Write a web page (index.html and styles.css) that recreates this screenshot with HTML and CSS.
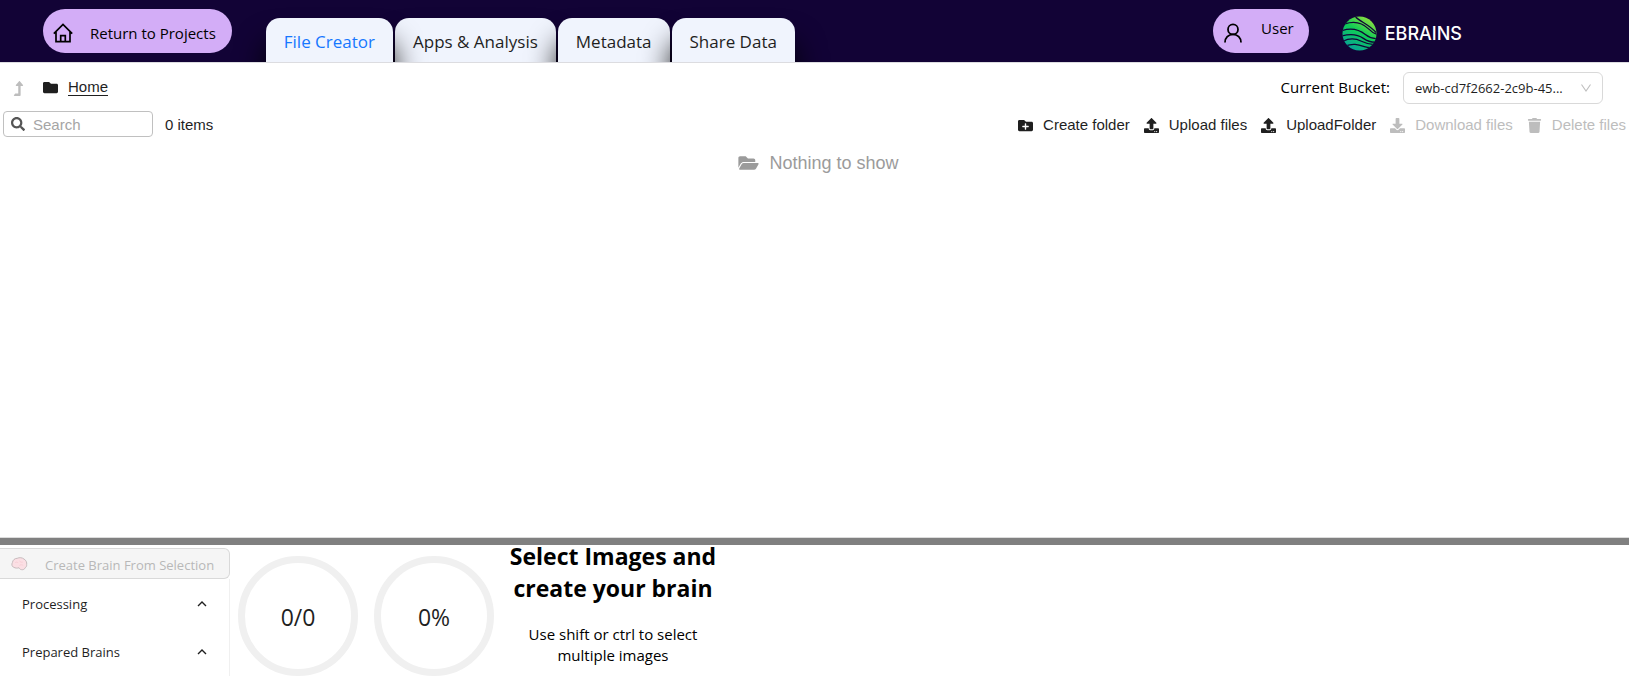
FILE: index.html
```html
<!DOCTYPE html>
<html lang="en">
<head>
<meta charset="utf-8">
<title>File Creator</title>
<link rel="stylesheet" href="styles.css">
</head>
<body>
<svg class="defs" aria-hidden="true">
  <symbol id="upload" viewBox="0 0 512 512"><path d="M296 384h-80c-13.3 0-24-10.7-24-24V192h-87.7c-17.8 0-26.7-21.5-14.1-34.1L242.3 5.7c7.5-7.5 19.8-7.5 27.3 0l152.2 152.2c12.6 12.6 3.7 34.1-14.1 34.1H320v168c0 13.3-10.7 24-24 24zm216-8v112c0 13.3-10.7 24-24 24H24c-13.3 0-24-10.7-24-24V376c0-13.3 10.7-24 24-24h136v8c0 30.9 25.1 56 56 56h80c30.9 0 56-25.1 56-56v-8h136c13.3 0 24 10.7 24 24zm-124 88c0-11-9-20-20-20s-20 9-20 20 9 20 20 20 20-9 20-20zm64 0c0-11-9-20-20-20s-20 9-20 20 9 20 20 20 20-9 20-20z"/></symbol>
  <symbol id="caret" viewBox="0 0 12 12"><path d="M2 8l4-4 4 4" fill="none" stroke="currentColor" stroke-width="1.4"/></symbol>
</svg>

<header class="topbar">
  <button class="pill home" type="button">
    <svg class="pill-icon" viewBox="0 0 20 20" fill="none" stroke="currentColor" stroke-width="1.7"><path d="M.8 10.6L10 1.4l9.200 9.200M3 9v9.600h14V9M7.700 18.600v-6h4.600v6"/></svg>
    <span>Return to Projects</span>
  </button>
  <nav class="tabs">
    <button class="tab active" type="button">File Creator</button>
    <button class="tab" type="button">Apps &amp; Analysis</button>
    <button class="tab" type="button">Metadata</button>
    <button class="tab" type="button">Share Data</button>
  </nav>
  <button class="pill user" type="button">
    <svg class="pill-icon" viewBox="0 0 20 20" fill="none" stroke="currentColor" stroke-width="1.8"><circle cx="10" cy="6.4" r="5"/><path d="M2 19.400c0-4.600 3.400-8 8-8s8 3.400 8 8"/></svg>
    <span class="user-name">User</span>
  </button>
  <a class="brand" href="#">
    <svg class="brand-mark" viewBox="0 0 36 36">
      <defs>
        <linearGradient id="leaf" x1="0.9" y1="0" x2="0.3" y2="1"><stop offset="0" stop-color="#a6e23c"/><stop offset=".5" stop-color="#10cc55"/><stop offset="1" stop-color="#07a398"/></linearGradient>
        <clipPath id="disc"><circle cx="18" cy="18" r="17.5"/></clipPath>
      </defs>
      <circle cx="18" cy="18" r="17.500" fill="url(#leaf)"/>
      <g clip-path="url(#disc)" fill="none" stroke="#120336" stroke-width="1.3">
        <path d="M14 1c5 5 14 8 21 16"/>
        <path d="M3 8c9-3 18-1 24 5 3 3 6 5 9 6"/>
        <path d="M0 15c12-4 19 0 24 4s8 4 12 4.500"/>
        <path d="M0 20.500c11-3 17-1 22 2.500s8 4 12 4"/>
        <path d="M1 26c8-4 15-2 19 0s7 3 13 3.500"/>
        <path d="M3 31c8-3 13-2 20 .5 3 1 5 1 7 1"/>
      </g>
    </svg>
    <span>EBRAINS</span>
  </a>
</header>

<main class="browser">
  <div class="path-row">
    <button class="icon-button" type="button" aria-label="Go up" disabled>
      <svg class="icon" viewBox="0 0 320 512" fill="currentColor"><path d="M313.500 135.700L205 9.400c-7-8-19-8-26 0L70.500 135.700C60 148 69 168 86 168h66v256H64c-5 0-11 2-15 6L7 479c-12 12-4 33 15 33h186c13 0 24-11 24-24V168h66c17 0 26-20 15.500-32.300z"/></svg>
    </button>
    <nav class="crumbs">
      <svg class="icon" viewBox="0 0 512 512" fill="currentColor"><path d="M464 128H272l-64-64H48C21.490 64 0 85.490 0 112v288c0 26.510 21.490 48 48 48h416c26.510 0 48-21.490 48-48V176c0-26.510-21.490-48-48-48z"/></svg>
      <a href="#">Home</a>
    </nav>
    <label class="bucket-label" for="bucket">Current Bucket:</label>
    <div class="bucket">
      <select id="bucket"><option>ewb-cd7f2662-2c9b-45...</option></select>
      <svg class="bucket-arrow" viewBox="0 0 12 12"><path d="M1.500 2.500L6 9l4.500-6.500" fill="none" stroke="#bfbfbf" stroke-width="1.100"/></svg>
    </div>
  </div>

  <div class="tool-row">
    <div class="search">
      <svg class="search-icon" viewBox="0 0 512 512" fill="currentColor"><path d="M505 442.700L405.300 343c-4.500-4.500-10.600-7-17-7H372c27.600-35.300 44-79.700 44-128C416 93.100 322.900 0 208 0S0 93.100 0 208s93.100 208 208 208c48.300 0 92.700-16.400 128-44v16.300c0 6.400 2.500 12.500 7 17l99.700 99.700c9.400 9.400 24.600 9.400 33.900 0l28.300-28.300c9.400-9.400 9.400-24.600.1-34zM208 336c-70.700 0-128-57.200-128-128 0-70.700 57.200-128 128-128 70.700 0 128 57.200 128 128 0 70.700-57.200 128-128 128z"/></svg>
      <input type="text" placeholder="Search" aria-label="Search">
    </div>
    <span class="count">0 items</span>
    <div class="actions">
      <button class="action" type="button"><svg class="icon" viewBox="0 0 512 512" fill="currentColor"><path d="M464 128H272l-64-64H48C21.490 64 0 85.490 0 112v288c0 26.510 21.490 48 48 48h416c26.510 0 48-21.490 48-48V176c0-26.510-21.490-48-48-48zm-96 168c0 8.840-7.160 16-16 16h-72v72c0 8.840-7.160 16-16 16h-16c-8.840 0-16-7.160-16-16v-72h-72c-8.840 0-16-7.160-16-16v-16c0-8.840 7.160-16 16-16h72v-72c0-8.840 7.160-16 16-16h16c8.840 0 16 7.160 16 16v72h72c8.840 0 16 7.160 16 16v16z"/></svg>Create folder</button>
      <button class="action" type="button"><svg class="icon" fill="currentColor"><use href="#upload"/></svg>Upload files</button>
      <button class="action" type="button"><svg class="icon" fill="currentColor"><use href="#upload"/></svg>UploadFolder</button>
      <button class="action" type="button" disabled><svg class="icon" viewBox="0 0 512 512" fill="currentColor"><path d="M216 0h80c13.300 0 24 10.700 24 24v168h87.700c17.800 0 26.700 21.500 14.100 34.100L269.700 378.300c-7.500 7.500-19.800 7.500-27.300 0L90.100 226.100c-12.600-12.600-3.700-34.100 14.100-34.100H192V24c0-13.300 10.700-24 24-24zm296 376v112c0 13.300-10.700 24-24 24H24c-13.300 0-24-10.700-24-24V376c0-13.300 10.700-24 24-24h146.700l49 49c20.100 20.100 52.500 20.100 72.600 0l49-49H488c13.300 0 24 10.700 24 24zm-124 88c0-11-9-20-20-20s-20 9-20 20 9 20 20 20 20-9 20-20zm64 0c0-11-9-20-20-20s-20 9-20 20 9 20 20 20 20-9 20-20z"/></svg>Download files</button>
      <button class="action" type="button" disabled><svg class="icon" viewBox="0 0 448 512" fill="currentColor"><path d="M432 32H312l-9.400-18.700A24 24 0 0 0 281.100 0H166.800a23.720 23.720 0 0 0-21.400 13.300L136 32H16A16 16 0 0 0 0 48v32a16 16 0 0 0 16 16h416a16 16 0 0 0 16-16V48a16 16 0 0 0-16-16zM53.200 467a48 48 0 0 0 47.900 45h245.800a48 48 0 0 0 47.900-45L416 128H32z"/></svg>Delete files</button>
    </div>
  </div>

  <p class="empty">
    <svg class="empty-icon" viewBox="0 0 576 512" fill="currentColor"><path d="M572.694 292.093L500.270 416.248A63.997 63.997 0 0 1 444.989 448H45.025c-18.523 0-30.064-20.093-20.731-36.093l72.424-124.155A64 64 0 0 1 152 256h399.964c18.523 0 30.064 20.093 20.730 36.093zM152 224h328v-48c0-26.510-21.490-48-48-48H272l-64-64H48C21.490 64 0 85.490 0 112v278.046l69.077-118.418C86.214 242.250 117.989 224 152 224z"/></svg>
    Nothing to show
  </p>
</main>

<section class="workbench">
  <aside class="side">
    <button class="create" type="button" disabled>
      <svg class="brain" viewBox="0 0 18 16"><path d="M3 11.500C.8 11 .4 8 1.500 6.500 1.800 3.800 4 2 6.500 2c2.500-1.200 5.500-.8 7.300.8C16 4 17 6.500 16.600 8.500c.2 2-.8 3-1.600 3.500-.6 1.600-2.200 2.300-3.800 2-1.200 0-2-.8-2.700-2-1.800.5-4 .5-5.500-.5z" fill="#fbdfe4" stroke="#c4b8ba"/><path d="M4.500 6.500c1.500-1 2.500-.5 3 .5M9 4.500c.5 1.500 2 2 3.500 1.500M9 9.500c1.500-1 3-.8 4 .3" fill="none" stroke="#f5c9d1" stroke-width=".8"/></svg>
      <span>Create Brain From Selection</span>
    </button>
    <div class="groups">
      <button class="group" type="button">Processing<svg class="caret"><use href="#caret"/></svg></button>
      <button class="group" type="button">Prepared Brains<svg class="caret"><use href="#caret"/></svg></button>
    </div>
  </aside>
  <div class="rings">
    <div class="ring">0/0</div>
    <div class="ring">0%</div>
  </div>
  <div class="hint">
    <h2>Select Images and create your brain</h2>
    <p>Use shift or ctrl to select multiple images</p>
  </div>
</section>
</body>
</html>
```

FILE: styles.css
```css
* { box-sizing: border-box; }

body {
  margin: 0;
  min-height: 100vh;
  display: flex;
  flex-direction: column;
  background: #fff;
  color: #000;
  font: 15px/20px "Open Sans", "Noto Sans", sans-serif;
}

button, input, select { font: inherit; color: inherit; }
button { border: 0; padding: 0; background: none; }
svg { display: block; flex: none; }
.defs { position: absolute; width: 0; height: 0; }

.topbar {
  display: flex;
  align-items: flex-start;
  height: 63px;
  padding-left: 43px;
  background: #120336;
  border-bottom: 1px solid #dcdce0;
  overflow: hidden;
}

.pill {
  display: flex;
  align-items: center;
  height: 44px;
  margin-top: 9px;
  border-radius: 22px;
  background: #d3adf7;
}
.pill-icon { width: 20px; height: 20px; margin-top: 4px; }
.home { padding: 0 16px 0 10px; gap: 17px; }
.home span { padding-top: 4px; }
.user { margin-left: auto; padding: 0 15px 0 10px; gap: 18px; }
.user-name { padding-bottom: 6px; }

.tabs { display: flex; gap: 2px; margin: 18px 0 0 34px; }
.tab {
  position: relative;
  height: 44px;
  padding: 4px 18px 0;
  border-radius: 14px 14px 0 0;
  background: #f0f4fd;
  color: #1f1f1f;
  font-size: 17px;
  box-shadow: 0 25px 30px #000;
}
.tab.active { z-index: 1; color: #1677ff; }

.brand {
  display: flex;
  align-items: center;
  gap: 8px;
  margin: 16px 167px 0 33px;
  color: #fff;
  font: 500 18px/35px Inter, sans-serif;
  text-decoration: none;
}
.brand-mark { width: 35px; height: 35px; }

.browser {
  flex: 1;
  border-bottom: 1px solid #dcdcdc;
  color: #1f1f1f;
  font-family: "Liberation Sans", Arial, sans-serif;
}

.icon { width: 15px; height: 15px; }

.path-row { display: flex; align-items: center; padding: 9px 26px 0 11px; }
.icon-button:disabled { color: #bdbdbd; }
.crumbs { display: flex; align-items: center; gap: 10px; margin-left: 17px; padding-bottom: 2px; }
.crumbs a { color: inherit; line-height: 16px; text-decoration: none; border-bottom: 1px solid; }
.bucket-label { margin-left: auto; padding-bottom: 2px; color: #000; font-family: "Open Sans", sans-serif; }
.bucket { position: relative; width: 200px; margin-left: 13px; }
.bucket select {
  width: 100%;
  height: 32px;
  padding: 0 30px 0 11px;
  border: 1px solid #d9d9d9;
  border-radius: 6px;
  background: #fff;
  appearance: none;
  font: 13px "Open Sans", sans-serif;
}
.bucket-arrow { position: absolute; right: 11px; top: 10px; width: 12px; height: 12px; }

.tool-row { display: flex; align-items: center; padding: 7px 3px 0; line-height: 22px; }
.search {
  display: flex;
  align-items: center;
  gap: 8px;
  width: 150px;
  height: 26px;
  padding: 0 7px;
  border: 1px solid #c0c0c0;
  border-radius: 4px;
}
.search-icon { width: 14px; height: 14px; color: #555; }
.search input { width: 100%; min-width: 0; padding: 1px 0 0; border: 0; outline: 0; background: none; }
.search input::placeholder { color: #a5a5a5; }
.count { margin-left: 12px; padding-top: 2px; }
.actions { display: flex; gap: 14px; margin-left: auto; padding-top: 2px; }
.action { display: flex; align-items: center; gap: 10px; }
.action:disabled { color: #bdbdbd; }

.empty {
  display: flex;
  justify-content: center;
  align-items: center;
  gap: 10px;
  margin: 16px 0 0;
  padding-left: 8px;
  color: #9b9b9b;
  font-size: 18px;
}
.empty-icon { width: 21px; height: 18px; }

.workbench { display: flex; height: 138px; border-top: 7px solid #808080; overflow: hidden; }

.side { display: flex; flex-direction: column; width: 230px; padding-top: 3px; }
.create {
  display: flex;
  align-items: center;
  gap: 17px;
  height: 32px;
  padding-left: 11px;
  border: 1px solid #d9d9d9;
  border-left: 0;
  border-radius: 0 6px 6px 0;
  background: #f5f5f5;
  color: #b8b8b8;
  font-size: 13px;
}
.create span { padding-top: 2px; }
.brain { width: 17px; height: 16px; }
.groups { flex: 1; padding-top: 1px; border-right: 1px solid #f0f0f0; }
.group {
  display: flex;
  align-items: center;
  justify-content: space-between;
  width: 100%;
  height: 48px;
  padding: 0 21px 0 22px;
  color: #1f1f1f;
  font-size: 13px;
}
.caret { width: 12px; height: 12px; }

.rings { display: flex; gap: 16px; padding: 11px 8px 0; }
.ring {
  width: 120px;
  height: 120px;
  border: 7px solid #f0f0f0;
  border-radius: 50%;
  color: #1f1f1f;
  font-size: 23px;
  line-height: 108px;
  text-align: center;
}

.hint { width: 216px; margin: -5px 0 0 3px; text-align: center; }
.hint h2 { margin: 0 0 20px; font-size: 23px; line-height: 32px; }
.hint p { margin: 0 10px; line-height: 21px; }
```
